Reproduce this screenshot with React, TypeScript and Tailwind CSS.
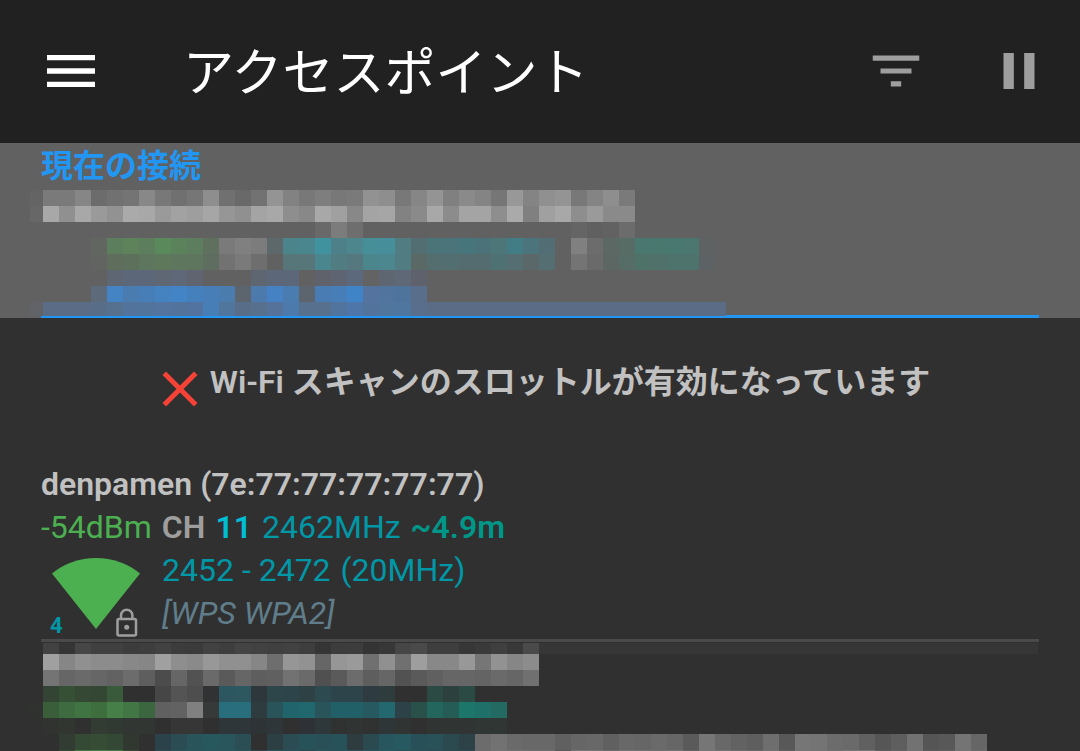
type IconProps = { d: string; className: string };

function Icon({ d, className }: IconProps) {
  return (
    <svg viewBox="0 0 24 24" fill="currentColor" className={className} aria-hidden="true">
      <path d={d} />
    </svg>
  );
}

const icons = {
  menu: "M3 18h18v-2H3v2zm0-5h18v-2H3v2zm0-7v2h18V6H3z",
  filter: "M10 18h4v-2h-4v2zM3 6v2h18V6H3zm3 7h12v-2H6v2z",
  pause: "M6 19h4V5H6v14zm8-14v14h4V5h-4z",
  close:
    "M19 6.41L17.59 5 12 10.59 6.41 5 5 6.41 10.59 12 5 17.59 6.41 19 12 13.41 17.59 19 19 17.59 13.41 12z",
};

// Each token is one 16px cell: two digits = gray level, six = full hex, "." = empty.
// The first token sits in the column left of the text margin.
const connectionCells = [
  "64 7a 7a 86 6c 71 74 88 78 70 76 8e 70 69 72 94 82 78 7e 78 7a 92 8e 78 86 94 80 8a 84 76 98 84 90 94 78 84 8e 7a",
  "67 a8 90 a8 9a 92 aa a8 9a a2 9e a6 96 90 a4 a8 8e 88 a8 a0 88 a4 a6 82 8a a8 8c a4 a4 8e aa 80 a0 a8 8e 9a 8a 8a",
  ". . . . . . . . . . . . . . . . . . 69 7c 6e . . . . . . . . . . . . . 65 60 62 6c",
  ". . . . 626660 5c7e5c 5e825a 5c7e5c 5a8a5c 5c825c 5c7e5e 60705e 7a 80 7c 5c686a 4c848c 4a868e 40929e 4e808a 4e868e 468e98 468e9a 507c82 526e72 4a7478 4a747a 46767c 4a7278 4c7678 427c84 4c747c 526e74 . 80 6c 5c6864 586c66 4a7870 48786e 487870 4c7670 5f6262",
  ". . . . 626462 5f6e5c 5c705c 5e765e 5e785c 5e765e 5e765e 5f6c60 72 7a 6e . 56767a 56767a 4a868e 507c82 54787e 4a868c 4c868e 507c82 5a6866 546e70 526e70 546c70 546c70 4e7274 546e72 5a686a 546e72 . 74 6a 5c6662 566c66 4e7268 50706a 4e726c 4e726c 5d6264",
  ". . . . . 5e6674 5c687a 5c687a 5f6674 5e6878 5f6470 . . . 5e6672 5c687a 5c687a . 5f626a 5e6472 5c687c 63 5e6672 5e6876 5f626c",
  ". . . . 5c6a7a 4484c4 4a7cb0 487eb8 4482c0 4284c6 4680bc 487eb8 4a7cae 5c646e 4c7aac 4482c4 4a7cb0 5c646e 4a7cb4 487eb8 4084c8 54739e 50749e 4f749c 586e8a",
  "616368 5a6c86 5a6c86 5a6c86 586e88 567090 52749c 50749c 5474a0 52749c 5272a0 487eb6 50769e 586e88 56708e 54729a 4c7aac 56708e 56708e 50749e 4e76a8 52739c 50769e 4e769e 586e8c",
];

const networkCells = [
  ". a0 86 90 8c 8c 88 86 a0 8e 8a 98 90 90 86 6e 96 92 66 96 9a 70 90 70 9e 88 88 98 76 92 86 8c",
  ". 74 66 6a 66 62 6c 5e 4c 66 52 6a 5a 66 5e 60 72 6a 50 5a 6c 5e 66 52 5a 60 66 66 64 6a 66 70",
  ". 344434 365036 344834 344634 3a5a3c . . 46 54 4e 303234 2c5660 2e5860 2e383c 2c464a 2c444a 2e4246 2c4a50 2c444a 2c444a 2e3c42 2e3c3e . . 2c4a44 2c403e 2c4a44",
  "303230 3a5e3a 3e6c40 407442 3e6e3e 468048 427644 3c6640 60 62 80 363a38 286e7c 286e7c 2e3c40 28545a 22646c 20686e 28545a 226068 226068 265a60 22686e 2c4248 2a504a 22665e 265c56 1c766a 20706a 226a62",
  ". 313331 323630 . 323c32 303a32 323632 323632 . 36 36 . 2e363a 2e363a 2e3436 2e363a . 2e3236 2e383a 303232 303432 303232 2e3638 303432 . 303432 303432 303432 303634 303634",
  ". . 323c32 344a34 364c34 344836 303830 . 2c424a 2a4c52 28545a 26585e 28565c 2a4e54 . 2c4044 2a4c52 28525a 285056 28525a 2e3c40 2a4a50 28565e 265a60 285058 285258 2a4a50 2c4246 6c 72 6a 68 68 60 66 68 60 68 66 6a 66 5a 76 68 62 5e 6e 58 76 74 6c 6a 60 56 5e 72 55 58 74 66",
  ". . 344a34 3e7a40 3e8040 407a40 344834 . 2a4c52 28545a 28565c 28565c 28565c 28545a 2c4246 28545a 28525a 2a4a50 28545a 28525a 285258 28565e 265a60 285258 285258 2a4c52 2a4a50 2c4a50 6c 74 72 70 70 58 76 74 6c 74 72 70 74 64 76 74 6c 68 72 60 76 74 70 76 76 5e 64 72 5c 60 74 6a",
];

const edgeCells =
  ". 42 35 46 40 40 3c 3e 42 3c 3b 42 3e 44 42 40 42 3e 35 3c 3d 34 37 46 4a 3e 3e 37 3a 3f 38 4a";

function Cells({ rows, y = 0, rowHeight = 16 }: { rows: string[]; y?: number; rowHeight?: number }) {
  return (
    <>
      {rows.map((row, r) =>
        row.split(" ").map((cell, c) =>
          cell === "." ? null : (
            <rect
              key={`${r}-${c}`}
              x={c * 16}
              y={y + r * 16}
              width={16}
              height={rowHeight}
              fill={cell.length === 2 ? `#${cell}${cell}${cell}` : `#${cell}`}
            />
          )
        )
      )}
    </>
  );
}

function Header() {
  return (
    <header className="flex h-[143px] items-center bg-[#212121] pr-[30px] pb-0.5 pl-[39px]">
      <button type="button" aria-label="メニュー" className="text-white">
        <Icon d={icons.menu} className="size-16" />
      </button>
      <h1 className="ml-20 flex-1 pt-1.5 text-[51px] leading-[60px] whitespace-nowrap text-white">
        アクセスポイント
      </h1>
      <div className="flex gap-[61px] text-[#9e9e9e]">
        <button type="button" aria-label="フィルター">
          <Icon d={icons.filter} className="size-[62px]" />
        </button>
        <button type="button" aria-label="一時停止">
          <Icon d={icons.pause} className="size-[62px]" />
        </button>
      </div>
    </header>
  );
}

function CurrentConnection() {
  return (
    <section className="bg-[#616161] px-[41px]">
      <div className="border-b-[3px] border-[#2196f3]">
        <h2 className="h-[47px] pt-0.5 text-[32px] leading-[43px] font-semibold text-[#2196f3]">
          現在の接続
        </h2>
        <svg
          width="701"
          height="126"
          viewBox="3 0 701 126"
          shapeRendering="crispEdges"
          className="-mb-px -ml-[11px] block"
          aria-hidden="true"
        >
          <Cells rows={connectionCells} />
          <rect x="400" y="112" width="299" height="14" fill="#5a6c86" />
        </svg>
      </div>
    </section>
  );
}

function SignalIcon() {
  return (
    <svg width="121" height="90" viewBox="0 0 121 90" className="shrink-0" role="img" aria-label="4">
      <path d="M11 24.500Q30 9 55 9T99 24.500L55 80z" fill="#4caf50" />
      <text x="9" y="84" fontSize="22" fontWeight="700" fill="#0097a7">
        4
      </text>
      <g fill="none" stroke="#9e9e9e" strokeWidth="2.500">
        <rect x="76.500" y="70" width="18.500" height="16.500" rx="1.500" />
        <path d="M80 70v-3.500a5.700 5.700 0 0 1 11.400 0V70" />
      </g>
      <circle cx="85.700" cy="78.300" r="2.500" fill="#9e9e9e" />
    </svg>
  );
}

function AccessPoint() {
  return (
    <li className="border-b-[3px] border-[#4a4a4a] text-[32px] leading-[43px]">
      <h3 className="font-semibold text-[#c1c1c1]">denpamen (7e:77:77:77:77:77)</h3>
      <p className="flex gap-2.5 whitespace-nowrap">
        <span className="text-[#4caf50]">-54dBm</span>
        <span className="font-semibold text-[#9e9e9e]">CH</span>
        <span className="font-semibold text-[#00bcd4]">11</span>
        <span className="text-[#0097a7]">2462MHz</span>
        <span className="font-semibold text-[#009688]">~4.9m</span>
      </p>
      <div className="flex">
        <SignalIcon />
        <div>
          <p className="flex gap-2.5 text-[#0097a7]">
            <span>2452 - 2472</span>
            <span>(20MHz)</span>
          </p>
          <p className="text-[#607d8b] italic">[WPS WPA2]</p>
        </div>
      </div>
    </li>
  );
}

export default function App() {
  return (
    <div className="h-screen overflow-hidden bg-[#303030] font-['Roboto','Noto_Sans_CJK_JP',sans-serif]">
      <Header />
      <main>
        <CurrentConnection />
        <div className="flex justify-center pt-[41px]">
          <Icon d={icons.close} className="size-[60px] shrink-0 text-[#f44336]" />
          <p className="pt-0.5 text-[32px] leading-[43px] font-semibold text-[#c1c1c1]">
            Wi-Fi スキャンのスロットルが有効になっています
          </p>
        </div>
        <ul className="px-[41px] pt-11">
          <AccessPoint />
          <li className="pt-px">
            <svg
              width="100%"
              height="123"
              shapeRendering="crispEdges"
              className="-ml-[14px] block overflow-visible"
              aria-hidden="true"
            >
              <rect x="512" width="499" height="11" fill="#363636" />
              <Cells rows={[edgeCells]} rowHeight={11} />
              <Cells rows={networkCells} y={11} />
            </svg>
          </li>
        </ul>
      </main>
    </div>
  );
}
